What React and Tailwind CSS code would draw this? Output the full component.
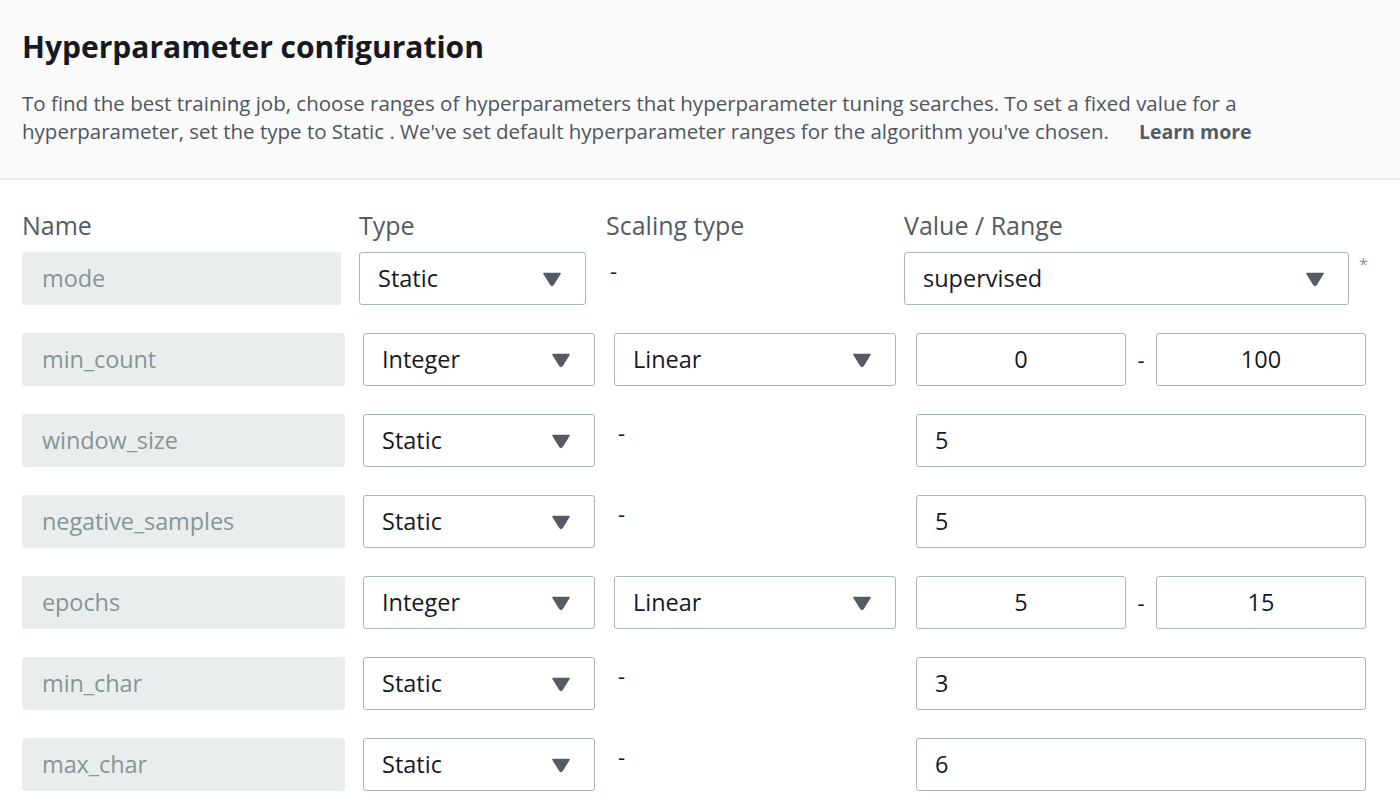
import React from "react";

const font = { fontFamily: '"Open Sans", "Noto Sans", Arial, sans-serif' };

function Caret() {
  return (
    <svg width="20" height="16" viewBox="0 0 20 16" className="shrink-0">
      <path d="M2 2.5 H18 L11.2 13.6 Q10 15.2 8.8 13.6 Z" fill="#545b64" stroke="#545b64" strokeWidth="1.5" strokeLinejoin="round" />
    </svg>
  );
}

function NameBox({ name, w }) {
  return (
    <div className={`${w} h-[53px] shrink-0 rounded-[3px] bg-[#eaeded] text-[#879596] flex items-center pl-5 text-[23.5px] tracking-[-0.1px]`}>
      {name}
    </div>
  );
}

function Select({ value, w }) {
  return (
    <div className={`${w} h-[53px] shrink-0 rounded-[3px] border border-[#aab7b8] bg-white flex items-center justify-between pl-[18px] pr-[23px] text-[23.5px] text-[#16191f]`}>
      <span>{value}</span>
      <Caret />
    </div>
  );
}

function Dash({ w }) {
  return <div className={`${w} h-[53px] shrink-0 pl-1 text-[22px] leading-[36px] text-[#16191f]`}>-</div>;
}

function Input({ value, w, center }) {
  return (
    <div className={`${w} h-[53px] shrink-0 rounded-[3px] border border-[#aab7b8] bg-white flex items-center text-[23.5px] text-[#16191f] ${center ? "justify-center" : "pl-[18px]"}`}>
      {value}
    </div>
  );
}

const rows = [
  { name: "min_count", type: "Integer", scaling: "Linear", range: ["0", "100"] },
  { name: "window_size", type: "Static", value: "5" },
  { name: "negative_samples", type: "Static", value: "5" },
  { name: "epochs", type: "Integer", scaling: "Linear", range: ["5", "15"] },
  { name: "min_char", type: "Static", value: "3" },
  { name: "max_char", type: "Static", value: "6" },
];

export default function App() {
  return (
    <div className="w-[1400px] h-[808px] bg-white overflow-hidden" style={font}>
      <div className="bg-[#fafafa] border-b-2 border-[#eaeded] h-[180px] px-[22px] pt-[27px]">
        <h1 className="text-[30px] leading-[40px] font-bold text-[#16191f]">Hyperparameter configuration</h1>
        <p className="mt-[22px] text-[20.5px] leading-[28px] text-[#4f555d] w-[1290px]">
          To find the best training job, choose ranges of hyperparameters that hyperparameter tuning searches. To set a fixed value for a hyperparameter, set the type to Static . We've set default hyperparameter ranges for the algorithm you've chosen.
          <span className="inline-block ml-[30px] text-[19.5px] font-bold text-[#545b64]">Learn more</span>
        </p>
      </div>

      <div className="px-[22px] pt-[28px]">
        <div className="flex text-[25px] leading-[34px] text-[#545b64]">
          <div className="w-[337px]">Name</div>
          <div className="w-[247px]">Type</div>
          <div className="w-[298px]">Scaling type</div>
          <div>Value / Range</div>
        </div>

        <div className="flex mt-[10px]">
          <NameBox name="mode" w="w-[319px]" />
          <div className="w-[18px] shrink-0" />
          <Select value="Static" w="w-[227px]" />
          <div className="w-[20px] shrink-0" />
          <Dash w="w-[298px]" />
          <Select value="supervised" w="w-[445px]" />
          <div className="pl-[10px] text-[16px] leading-[20px] text-[#879596] pt-[2px]">*</div>
        </div>

        <div className="flex flex-col gap-[28px] mt-[28px]">
          {rows.map((r) => (
            <div key={r.name} className="flex">
              <NameBox name={r.name} w="w-[323px]" />
              <div className="w-[18px] shrink-0" />
              <Select value={r.type} w="w-[232px]" />
              <div className="w-[19px] shrink-0" />
              {r.scaling ? <Select value={r.scaling} w="w-[282px]" /> : <Dash w="w-[282px]" />}
              <div className="w-[20px] shrink-0" />
              {r.range ? (
                <div className="flex items-center w-[450px]">
                  <Input value={r.range[0]} w="w-[210px]" center />
                  <div className="flex-1 text-center text-[22px] text-[#16191f]">-</div>
                  <Input value={r.range[1]} w="w-[210px]" center />
                </div>
              ) : (
                <Input value={r.value} w="w-[450px]" />
              )}
            </div>
          ))}
        </div>
      </div>
    </div>
  );
}
